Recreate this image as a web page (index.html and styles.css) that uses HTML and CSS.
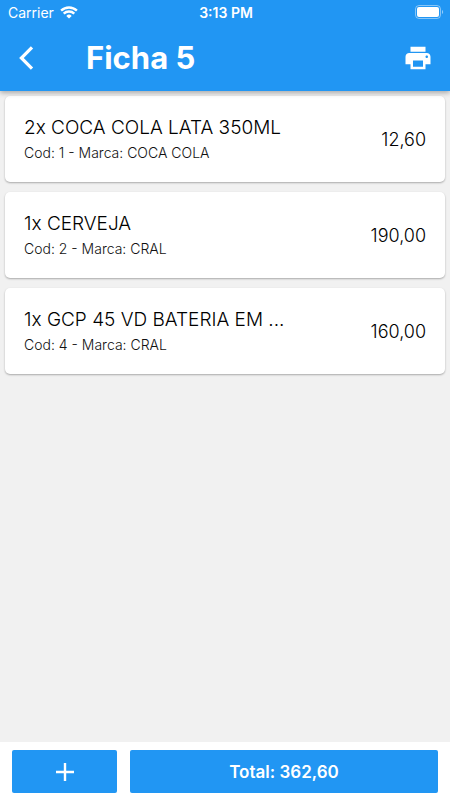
FILE: index.html
```html
<!DOCTYPE html>
<html lang="pt-BR">
<head>
<meta charset="utf-8">
<meta name="viewport" content="width=device-width, initial-scale=1">
<title>Ficha 5</title>
<link rel="stylesheet" href="styles.css">
</head>
<body>
<header class="top">
  <div class="status">
    <span class="carrier">Carrier
      <svg class="wifi" viewBox="0 0 18 13" aria-hidden="true"><path d="M9 12.6 6.3 9.9a3.9 3.9 0 0 1 5.4 0z" fill="currentColor"/><path d="M3.7 7.6a7.6 7.6 0 0 1 10.6 0M1.1 4.7a11.4 11.4 0 0 1 15.8 0" fill="none" stroke="currentColor" stroke-width="2.4"/></svg>
    </span>
    <span class="time">3:13 PM</span>
    <svg class="battery" viewBox="0 0 29 14" aria-hidden="true"><rect x=".5" y=".5" width="25" height="13" rx="3.5" fill="none" stroke="currentColor" opacity=".45"/><rect x="2" y="2" width="22" height="10" rx="2" fill="currentColor"/><path d="M27 5a2.3 2.3 0 0 1 0 4z" fill="currentColor" opacity=".5"/></svg>
  </div>
  <div class="bar">
    <button class="icon-button" type="button" aria-label="Voltar"><svg class="back" viewBox="0 0 16 24" aria-hidden="true"><path d="M14 1.4 3.4 12 14 22.6" fill="none" stroke="currentColor" stroke-width="3.2"/></svg></button>
    <h1 class="title">Ficha 5</h1>
    <button class="icon-button" type="button" aria-label="Imprimir"><svg class="print" viewBox="0 0 24 24" aria-hidden="true"><path d="M19 8H5c-1.66 0-3 1.34-3 3v6h4v4h12v-4h4v-6c0-1.66-1.34-3-3-3zm-3 11H8v-5h8v5zm3-7c-.55 0-1-.45-1-1s.45-1 1-1 1 .45 1 1-.45 1-1 1zm-1-9H6v4h12V3z" fill="currentColor"/></svg></button>
  </div>
</header>
<main class="items">
  <article class="card">
    <div class="info">
      <h2 class="name">2x COCA COLA LATA 350ML</h2>
      <p class="detail">Cod: 1 - Marca: COCA COLA</p>
    </div>
    <span class="price">12,60</span>
  </article>
  <article class="card">
    <div class="info">
      <h2 class="name">1x CERVEJA</h2>
      <p class="detail">Cod: 2 - Marca: CRAL</p>
    </div>
    <span class="price">190,00</span>
  </article>
  <article class="card">
    <div class="info">
      <h2 class="name">1x GCP 45 VD BATERIA EM ...</h2>
      <p class="detail">Cod: 4 - Marca: CRAL</p>
    </div>
    <span class="price">160,00</span>
  </article>
</main>
<footer class="actions">
  <button class="action" type="button" aria-label="Adicionar"><svg class="plus" viewBox="0 0 18 18" aria-hidden="true"><path d="M9 0v18M0 9h18" fill="none" stroke="currentColor" stroke-width="2.4"/></svg></button>
  <button class="action" type="button">Total: 362,60</button>
</footer>
</body>
</html>
```
FILE: styles.css
```css
* { box-sizing: border-box; }

body {
  margin: 0;
  min-height: 100vh;
  display: flex;
  flex-direction: column;
  background: #f1f1f1;
  color: #000;
  font-family: Inter, "Liberation Sans", sans-serif;
}

h1, h2, p { margin: 0; }

button {
  border: 0;
  padding: 0;
  background: none;
  color: inherit;
  font: inherit;
}

svg { display: block; }

.top {
  position: relative;
  background: #2196f3;
  color: #fff;
  box-shadow: 0 2px 5px rgba(0, 0, 0, .3);
}

.status {
  display: grid;
  grid-template-columns: 1fr auto 1fr;
  align-items: center;
  height: 24px;
  padding: 0 6px 0 8px;
  font-size: 14px;
}

.carrier {
  display: flex;
  align-items: center;
  gap: 6px;
}

.wifi { width: 18px; height: 13px; }
.time { font-weight: 600; }
.battery { width: 29px; height: 14px; justify-self: end; }

.bar {
  display: flex;
  align-items: center;
  height: 67px;
  padding: 0 4px;
}

.icon-button {
  display: grid;
  place-items: center;
  width: 56px;
  height: 56px;
}

.bar .icon-button:first-child { width: 44px; }
.back { width: 16px; height: 24px; }
.print { width: 30px; height: 30px; }

.title {
  flex: 1;
  padding-left: 38px;
  font-size: 31px;
  line-height: 36px;
  font-weight: 700;
}

.items {
  flex: 1;
  display: flex;
  flex-direction: column;
  gap: 10px;
  padding: 5px;
}

.card {
  display: flex;
  align-items: center;
  justify-content: space-between;
  gap: 16px;
  padding: 18px 19px;
  background: #fff;
  border-radius: 5px;
  box-shadow: 0 1px 2px rgba(0, 0, 0, .3);
}

.info { min-width: 0; }

.name {
  font-size: 19px;
  line-height: 28px;
  font-weight: 300;
  overflow: hidden;
  text-overflow: ellipsis;
  white-space: nowrap;
}

.detail {
  font-size: 14px;
  line-height: 22px;
  font-weight: 300;
  color: #111;
}

.price { font-size: 18px; font-weight: 300; }

.actions {
  display: grid;
  grid-template-columns: 105fr 308fr;
  gap: 13px;
  padding: 8px 12px 7px;
  background: #fff;
}

.action {
  display: grid;
  place-items: center;
  height: 43px;
  border-radius: 2px;
  background: #2196f3;
  color: #fff;
  font-size: 17px;
  font-weight: 600;
}

.plus { width: 18px; height: 18px; }
```
